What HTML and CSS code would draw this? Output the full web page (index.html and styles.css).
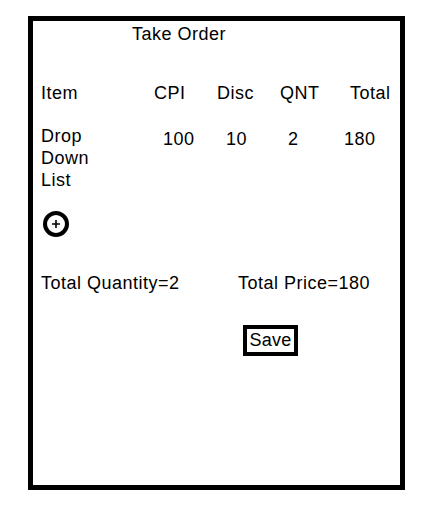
FILE: index.html
```html
<!DOCTYPE html>
<html>
<head>
<meta charset="utf-8">
<link rel="stylesheet" href="styles.css">
</head>
<body>
<div class="card">
  <div class="title">Take Order</div>
  <div class="row head">
    <span>Item</span><span>CPI</span><span>Disc</span><span>QNT</span><span>Total</span>
  </div>
  <div class="row data">
    <span class="item">Drop<br>Down<br>List</span><span class="num">100</span><span class="num">10</span><span class="num">2</span><span class="num">180</span>
  </div>
  <div class="add">
    <svg width="28" height="28" viewBox="0 0 28 28">
      <circle cx="14" cy="14" r="11" fill="none" stroke="#000" stroke-width="4"/>
      <path d="M14 10v8M10 14h8" stroke="#000" stroke-width="1.6"/>
    </svg>
  </div>
  <div class="totals">
    <span>Total Quantity=2</span><span>Total Price=180</span>
  </div>
  <div class="actions">
    <button class="save">Save</button>
  </div>
</div>
</body>
</html>
```
FILE: styles.css
```css
html, body {
  margin: 0;
  padding: 0;
  background: #fff;
}
body {
  font-family: "Liberation Sans", Arial, sans-serif;
  font-size: 18px;
  letter-spacing: 0.5px;
  color: #000;
}
.card {
  box-sizing: border-box;
  margin: 16px 0 0 28px;
  width: 377px;
  height: 474px;
  border: 5px solid #000;
  padding-top: 3px;
}
.title {
  line-height: 20px;
  padding-left: 99px;
}
.row {
  display: grid;
  padding-left: 8px;
}
.head {
  margin-top: 39px;
  line-height: 20px;
  grid-template-columns: 113px 63px 63px 70px auto;
}
.data {
  margin-top: 22px;
  line-height: 22px;
  grid-template-columns: 122px 63px 62px 56px auto;
}
.num {
  padding-top: 3px;
}
.add {
  margin-top: 19px;
  padding-left: 9px;
  height: 28px;
}
.add svg {
  display: block;
}
.totals {
  margin-top: 35px;
  line-height: 20px;
  padding-left: 8px;
  display: grid;
  grid-template-columns: 197px auto;
}
.actions {
  margin-top: 32px;
  padding-left: 210px;
}
.save {
  box-sizing: border-box;
  width: 55px;
  height: 31px;
  border: 4px solid #000;
  background: #fff;
  font: inherit;
  letter-spacing: 0.3px;
  padding: 0;
  color: #000;
}
```
